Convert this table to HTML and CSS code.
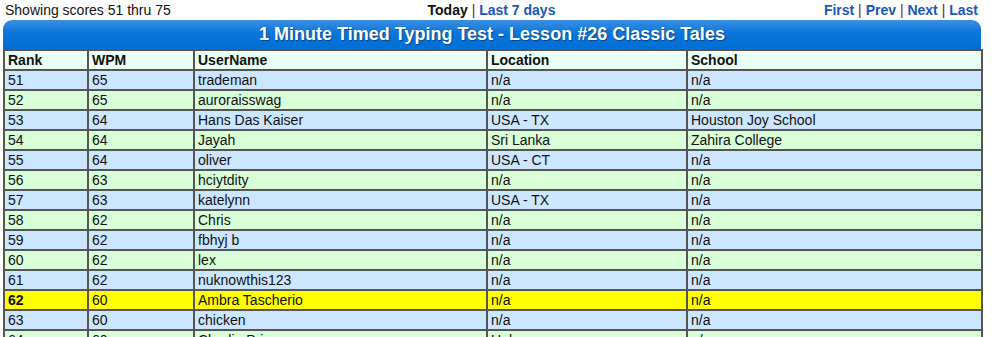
FILE: index.html
```html
<!DOCTYPE html>
<html>
<head>
<meta charset="utf-8">
<link rel="stylesheet" href="styles.css">
</head>
<body>
<div class="page">
  <div class="topnav">
    <div class="left">Showing scores 51 thru 75</div>
    <div class="center"><b>Today</b> <span class="sep">|</span> <a href="#">Last 7 days</a></div>
    <div class="right"><a href="#">First</a> <span class="sep">|</span> <a href="#">Prev</a> <span class="sep">|</span> <a href="#">Next</a> <span class="sep">|</span> <a href="#">Last</a></div>
  </div>
  <div class="board">
    <div class="title">1 Minute Timed Typing Test - Lesson #26 Classic Tales</div>
    <table class="scores">
      <colgroup><col class="c1"><col class="c2"><col class="c3"><col class="c4"><col class="c5"></colgroup>
      <thead>
        <tr><th>Rank</th><th>WPM</th><th>UserName</th><th>Location</th><th>School</th></tr>
      </thead>
      <tbody>
        <tr class="blue"><td>51</td><td>65</td><td>trademan</td><td>n/a</td><td>n/a</td></tr>
        <tr class="green"><td>52</td><td>65</td><td>auroraisswag</td><td>n/a</td><td>n/a</td></tr>
        <tr class="blue"><td>53</td><td>64</td><td>Hans Das Kaiser</td><td>USA - TX</td><td>Houston Joy School</td></tr>
        <tr class="green"><td>54</td><td>64</td><td>Jayah</td><td>Sri Lanka</td><td>Zahira College</td></tr>
        <tr class="blue"><td>55</td><td>64</td><td>oliver</td><td>USA - CT</td><td>n/a</td></tr>
        <tr class="green"><td>56</td><td>63</td><td>hciytdity</td><td>n/a</td><td>n/a</td></tr>
        <tr class="blue"><td>57</td><td>63</td><td>katelynn</td><td>USA - TX</td><td>n/a</td></tr>
        <tr class="green"><td>58</td><td>62</td><td>Chris</td><td>n/a</td><td>n/a</td></tr>
        <tr class="blue"><td>59</td><td>62</td><td>fbhyj b</td><td>n/a</td><td>n/a</td></tr>
        <tr class="green"><td>60</td><td>62</td><td>lex</td><td>n/a</td><td>n/a</td></tr>
        <tr class="blue"><td>61</td><td>62</td><td>nuknowthis123</td><td>n/a</td><td>n/a</td></tr>
        <tr class="me"><td><b>62</b></td><td>60</td><td>Ambra Tascherio</td><td>n/a</td><td>n/a</td></tr>
        <tr class="blue"><td>63</td><td>60</td><td>chicken</td><td>n/a</td><td>n/a</td></tr>
        <tr class="green"><td>64</td><td>60</td><td>Charlie Prince</td><td>Unknown</td><td>n/a</td></tr>
      </tbody>
    </table>
  </div>
</div>
</body>
</html>
```
FILE: styles.css
```css
html, body {
  margin: 0;
  padding: 0;
  background: #ffffff;
}
body {
  font-family: "Liberation Sans", Arial, sans-serif;
  font-size: 14px;
  color: #111111;
}
.page {
  padding: 0 11px 0 3px;
}
.topnav {
  display: grid;
  grid-template-columns: 1fr auto 1fr;
  align-items: center;
  height: 20px;
  padding: 0 3px 0 2px;
}
.topnav .right {
  text-align: right;
}
.topnav a {
  color: #1a56b8;
  font-weight: bold;
  text-decoration: none;
}
.topnav b {
  color: #111111;
}
.sep {
  color: #7a2020;
}
.board {
  width: 978px;
}
.title {
  height: 29px;
  line-height: 28px;
  border-radius: 9px 9px 0 0;
  background: linear-gradient(to bottom, #3b8fe2 0%, #0a75da 45%, #0070d6 100%);
  color: #ffffff;
  font-weight: bold;
  font-size: 18px;
  text-align: center;
  text-shadow: 1px 1px 1px rgba(0, 40, 100, 0.6);
}
.scores {
  width: 978px;
  border-collapse: collapse;
  table-layout: fixed;
  border: 2px solid #555555;
}
.c1 { width: 84px; }
.c2 { width: 106px; }
.c3 { width: 293px; }
.c4 { width: 200px; }
.c5 { width: 295px; }
.scores th, .scores td {
  border: 2px solid #555555;
  height: 18px;
  padding: 0 3px;
  text-align: left;
  white-space: nowrap;
  overflow: hidden;
  line-height: 16px;
}
.scores th {
  background: #eafff3;
  font-weight: bold;
}
.blue td { background: #cce6ff; }
.green td { background: #d9ffd9; }
.me td { background: #ffff00; }
```
